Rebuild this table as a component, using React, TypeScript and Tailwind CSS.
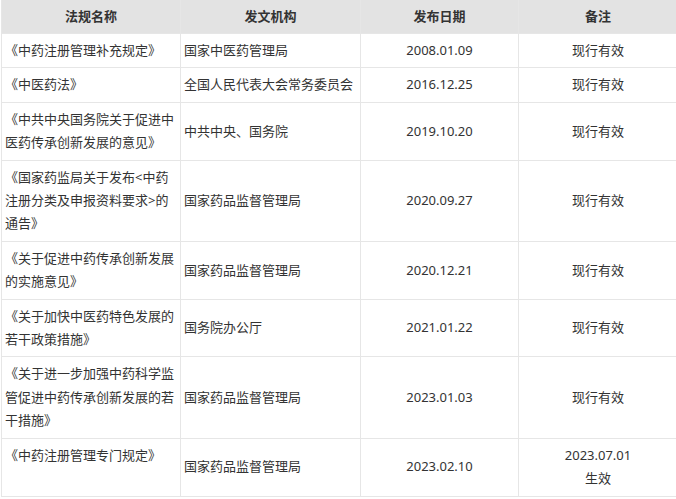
import React from "react";

type Row = { name: string; org: string; date: string; note: React.ReactNode };

const rows: Row[] = [
  { name: "《中药注册管理补充规定》", org: "国家中医药管理局", date: "2008.01.09", note: "现行有效" },
  { name: "《中医药法》", org: "全国人民代表大会常务委员会", date: "2016.12.25", note: "现行有效" },
  { name: "《中共中央国务院关于促进中医药传承创新发展的意见》", org: "中共中央、国务院", date: "2019.10.20", note: "现行有效" },
  { name: "《国家药监局关于发布<中药注册分类及申报资料要求>的通告》", org: "国家药品监督管理局", date: "2020.09.27", note: "现行有效" },
  { name: "《关于促进中药传承创新发展的实施意见》", org: "国家药品监督管理局", date: "2020.12.21", note: "现行有效" },
  { name: "《关于加快中医药特色发展的若干政策措施》", org: "国务院办公厅", date: "2021.01.22", note: "现行有效" },
  { name: "《关于进一步加强中药科学监管促进中药传承创新发展的若干措施》", org: "国家药品监督管理局", date: "2023.01.03", note: "现行有效" },
  {
    name: "《中药注册管理专门规定》",
    org: "国家药品监督管理局",
    date: "2023.02.10",
    note: (
      <>
        2023.07.01
        <br />
        生效
      </>
    ),
  },
];

const font = { fontFamily: '"Noto Sans", "Noto Sans CJK SC", sans-serif' };

export default function App() {
  return (
    <div className="w-[676px] h-[499px] overflow-hidden bg-white" style={font}>
      <div className="ml-[1px] w-[677px] grid grid-cols-[178px_179px_157px_158px] gap-px p-px bg-[#e6e6e6] text-[13px] leading-[23.4px] text-[#333]">
        {["法规名称", "发文机构", "发布日期", "备注"].map((h) => (
          <div key={h} className="bg-[#e3e3e3] font-bold text-center py-[5px] h-[33px] -mt-px pt-[5px]">
            {h}
          </div>
        ))}
        {rows.map((r, i) => (
          <React.Fragment key={i}>
            <div className="bg-white px-[3px] py-[5px] text-left">{r.name}</div>
            <div className="bg-white px-[3px] py-[5px] flex items-center">{r.org}</div>
            <div className="bg-white px-[3px] py-[5px] flex items-center justify-center">{r.date}</div>
            <div className="bg-white px-[3px] py-[5px] flex items-center justify-center text-center">{r.note}</div>
          </React.Fragment>
        ))}
      </div>
    </div>
  );
}
